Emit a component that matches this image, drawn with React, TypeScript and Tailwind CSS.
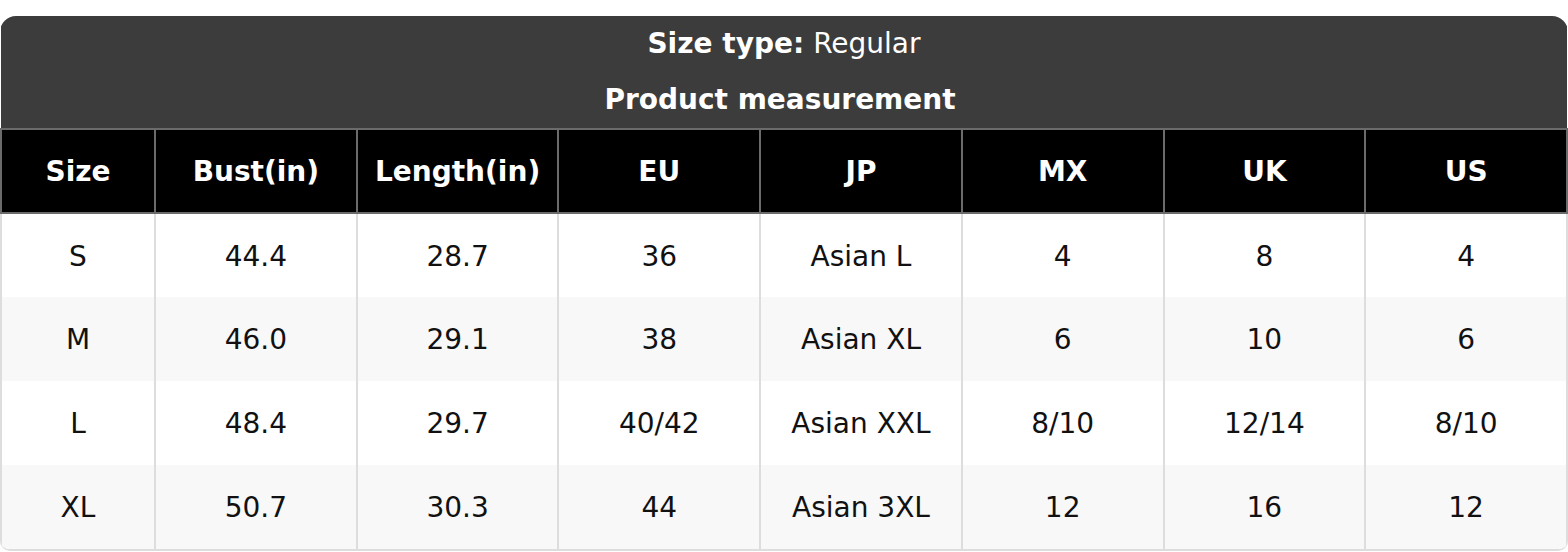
const COLUMNS = ["Size", "Bust(in)", "Length(in)", "EU", "JP", "MX", "UK", "US"];

const ROWS = [
  ["S", "44.4", "28.7", "36", "Asian L", "4", "8", "4"],
  ["M", "46.0", "29.1", "38", "Asian XL", "6", "10", "6"],
  ["L", "48.4", "29.7", "40/42", "Asian XXL", "8/10", "12/14", "8/10"],
  ["XL", "50.7", "30.3", "44", "Asian 3XL", "12", "16", "12"],
];

export default function App() {
  return (
    <div className="w-[1568px] h-[552px] bg-white pt-4 font-['DejaVu_Sans',sans-serif] text-[28px]">
      <div className="overflow-hidden rounded-t-[16px] rounded-b-[10px] border-b-2 border-[#dddddd]">
        <table className="w-full table-fixed border-collapse">
          <colgroup>
            <col className="w-[154px]" />
            {COLUMNS.slice(1).map((c) => (
              <col key={c} />
            ))}
          </colgroup>
          <thead>
            <tr>
              <th colSpan={8} className="bg-[#3c3c3c] p-0 text-white">
                <div className="flex h-14 items-center justify-center">
                  <span className="font-bold">Size type:</span>
                  <span className="ml-[9px] font-normal">Regular</span>
                </div>
                <div className="flex h-14 items-center justify-center pr-2 font-bold">
                  Product measurement
                </div>
              </th>
            </tr>
            <tr>
              {COLUMNS.map((c) => (
                <th
                  key={c}
                  className="h-[84px] border-2 border-[#6b6b6b] bg-black p-0 pt-[2px] text-center font-bold text-white"
                >
                  {c}
                </th>
              ))}
            </tr>
          </thead>
          <tbody>
            {ROWS.map((row, i) => (
              <tr key={row[0]} className={i % 2 === 1 ? "bg-[#f8f8f8]" : "bg-white"}>
                {row.map((cell, j) => (
                  <td
                    key={j}
                    className="h-[84px] border-x-2 border-[#dddddd] p-0 pt-[2px] text-center font-normal text-[#111111]"
                  >
                    {cell}
                  </td>
                ))}
              </tr>
            ))}
          </tbody>
        </table>
      </div>
    </div>
  );
}
